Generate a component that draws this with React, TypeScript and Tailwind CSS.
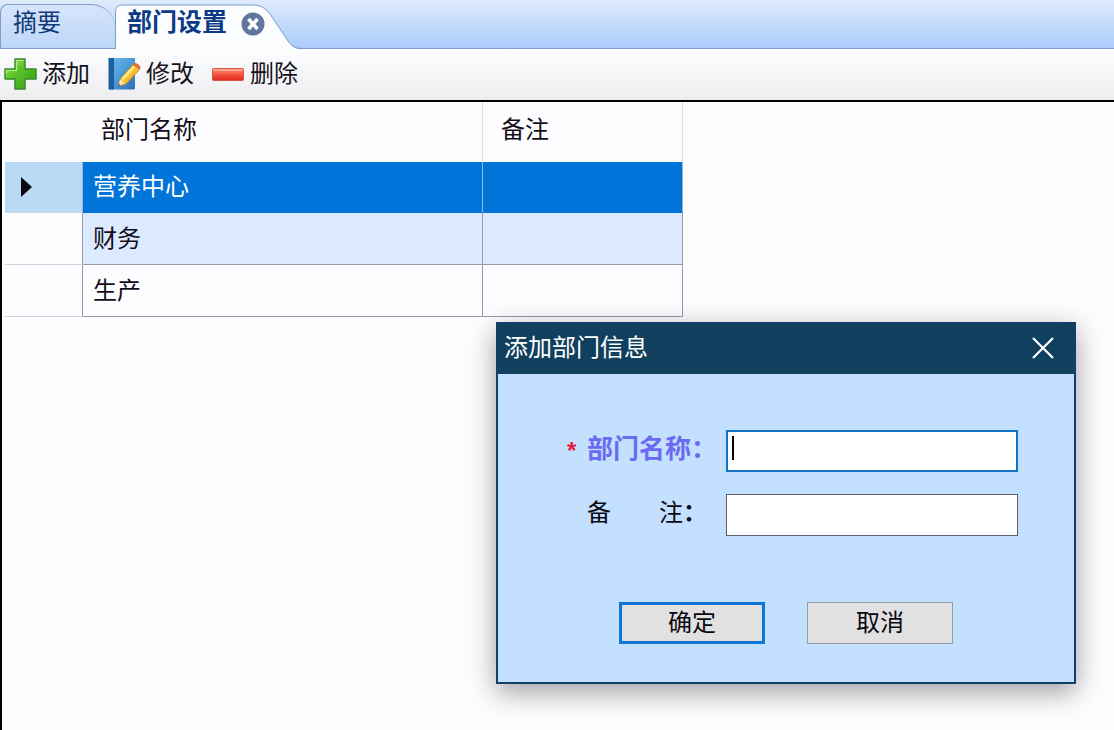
import { useState } from "react"

const departments = [
  { name: "营养中心", remark: "" },
  { name: "财务", remark: "" },
  { name: "生产", remark: "" },
]

const AddIcon = () => (
  <svg width="34" height="34" viewBox="0 0 34 34" aria-hidden="true">
    <defs>
      <linearGradient id="plus" x1="0" y1="0" x2="1" y2="1">
        <stop offset="0" stopColor="#a5e86a" />
        <stop offset="0.4" stopColor="#5cc52c" />
        <stop offset="1" stopColor="#2f9a12" />
      </linearGradient>
    </defs>
    <path d="M11 2h10v10h11v10H21v10H11V22H1V12h10z" fill="url(#plus)" stroke="#3a8a2a" strokeWidth="1.5" strokeLinejoin="round" />
    <path d="M19.500 3.500h-7V13.500H2.500v3" fill="none" stroke="#b9ee8c" strokeWidth="1.200" />
  </svg>
)

const EditIcon = () => (
  <svg width="34" height="34" viewBox="0 0 34 34" aria-hidden="true">
    <defs>
      <linearGradient id="book" x1="0" y1="0" x2="1" y2="1">
        <stop offset="0" stopColor="#6db9ea" />
        <stop offset="0.5" stopColor="#4c9bd8" />
        <stop offset="1" stopColor="#2a6fb4" />
      </linearGradient>
    </defs>
    <path d="M1 1h26v30a1.500 1.500 0 0 1-1.500 1.500H1z" fill="url(#book)" />
    <path d="M.5 1H6v31.500H.5z" fill="#1d5f9f" />
    <path d="M10.500 29 12 22 25 7.500l6.500 5L18 27z" fill="#f5bd2f" stroke="#b87918" strokeWidth="0.800" />
    <path d="M13 21.500 25 8.500l2.500 2L15 24z" fill="#ffe57d" />
    <path d="M25 7.500l1-1q1.500-1 3.500.5l2 1.500q1.500 1.500.8 3l-.8 1z" fill="#e6683c" />
    <path d="M12 22.500 10.500 29l6.500-2.500z" fill="#fbe6c0" />
    <path d="M11 27 10.500 29l2-.7z" fill="#333" />
  </svg>
)

const DeleteIcon = () => (
  <svg width="34" height="34" viewBox="0 0 34 34" aria-hidden="true">
    <defs>
      <linearGradient id="minus" x1="0" y1="0" x2="0" y2="1">
        <stop offset="0" stopColor="#ff9a80" />
        <stop offset="0.5" stopColor="#f2503a" />
        <stop offset="1" stopColor="#dd2a1b" />
      </linearGradient>
    </defs>
    <rect x="0.500" y="11.500" width="31" height="12" rx="1" fill="url(#minus)" stroke="#d9523f" />
    <path d="M2 13h28" stroke="#ffc1ae" />
  </svg>
)

const Tabs = () => (
  <nav className="flex h-[49px] items-end bg-linear-to-b from-[#dfeafb] to-[#a9cbfb] shadow-[inset_0_-1px_0_#7f9dcb]">
    <button
      type="button"
      className="flex h-[45px] w-[115px] items-start rounded-tl-lg rounded-tr-3xl border border-r-0 border-[#7f9dcb] bg-linear-to-b from-[#d6e5fb] to-[#bdd6f8] pt-1 pl-3 text-2xl leading-7 text-[#123a78]"
    >
      摘要
    </button>
    <div className="relative flex h-[45px] w-[185px] items-start gap-[14px] pt-1 pl-3">
      <svg className="absolute inset-0" width="185" height="45" viewBox="0 0 185 45" aria-hidden="true">
        <path d="M0 45V8Q0 1 7 1H138Q149 1 155 10L173 37Q178 44.500 185 45z" fill="#fcfdff" />
        <path d="M.5 45V8Q.5 1 7 1H138Q149 1 155 10L173 37Q178 44.500 185 44.500" fill="none" stroke="#7f9dcb" />
      </svg>
      <button type="button" className="relative text-[25px] leading-7 font-bold text-[#0c3a86]">
        部门设置
      </button>
      <button type="button" aria-label="关闭标签" className="relative pt-1">
        <svg width="24" height="24" viewBox="0 0 24 24" aria-hidden="true">
          <circle cx="12" cy="12" r="11.500" fill="#61769f" />
          <path d="M7.500 7l9 10M16.500 7l-9 10" stroke="#fff" strokeWidth="3.600" />
        </svg>
      </button>
    </div>
  </nav>
)

const Toolbar = () => (
  <div className="flex h-[51px] items-center gap-[18px] bg-linear-to-b from-[#fcfdff] to-[#ededf0] pb-[2px] pl-1 text-2xl leading-8 text-[#15101c]">
    <button type="button" className="flex items-center gap-1">
      <AddIcon />
      添加
    </button>
    <button type="button" className="flex items-center gap-1">
      <EditIcon />
      修改
    </button>
    <button type="button" className="flex items-center gap-1">
      <DeleteIcon />
      删除
    </button>
  </div>
)

const DepartmentTable = ({ selected, onSelect }: { selected: number; onSelect: (index: number) => void }) => (
  <table className="w-[678px] table-fixed border-separate border-spacing-0 text-2xl leading-8 text-[#120c18]">
    <colgroup>
      <col className="w-[78px]" />
      <col className="w-[400px]" />
      <col className="w-[200px]" />
    </colgroup>
    <thead>
      <tr className="h-[60px] text-left">
        <th className="font-normal" aria-label="当前行"></th>
        <th className="border-r border-[#dcdce6] pb-1 pl-[18px] font-normal">部门名称</th>
        <th className="border-r border-[#dcdce6] pb-1 pl-[18px] font-normal">备注</th>
      </tr>
    </thead>
    <tbody>
      {departments.map((department, index) => {
        const active = index === selected
        const cell = active
          ? "bg-[#0074d9] text-white border-b-[#0074d9] border-r-[#9cb6d6]"
          : index % 2 === 1
            ? "bg-[#dbeaff] border-b-[#9a97a8] border-r-[#9a97a8]"
            : "border-b-[#9a97a8] border-r-[#9a97a8]"
        return (
          <tr key={department.name} className={active ? "h-[51px]" : "h-[52px]"} onClick={() => onSelect(index)}>
            <td
              className={
                active
                  ? "border-r border-b border-r-[#9cb6d6] border-b-[#d5d9e4] bg-[#b9daf5] pl-[15px]"
                  : "border-r border-b border-r-[#9a97a8] border-b-[#d5d5de]"
              }
            >
              {active && (
                <svg width="12" height="20" viewBox="0 0 12 20" aria-hidden="true">
                  <path d="M1 0v20L12 10z" fill="#0b0710" />
                </svg>
              )}
            </td>
            <td className={`border-r border-b pl-[10px] ${cell}`}>{department.name}</td>
            <td className={`border-r border-b pl-[10px] ${cell}`}>{department.remark}</td>
          </tr>
        )
      })}
    </tbody>
  </table>
)

const AddDialog = ({ onClose }: { onClose: () => void }) => {
  const [name, setName] = useState("")
  const [remark, setRemark] = useState("")

  return (
    <div
      role="dialog"
      aria-labelledby="dialog-title"
      className="absolute top-[322px] left-[496px] w-[580px] border-2 border-[#123f68] bg-[#c3e0ff] text-2xl leading-8 text-[#0b0710] shadow-[0_8px_26px_rgba(0,0,0,0.38)]"
    >
      <div className="flex h-[50px] items-center justify-between bg-[#11405f] pr-5 pb-[2px] pl-[6px] text-white">
        <h2 id="dialog-title">添加部门信息</h2>
        <button type="button" aria-label="关闭" onClick={onClose}>
          <svg width="22" height="22" viewBox="0 0 22 22" aria-hidden="true">
            <path d="M1 1l20 20M21 1L1 21" stroke="#fff" strokeWidth="2.200" />
          </svg>
        </button>
      </div>
      <form className="pt-8 pr-6 pb-[38px] pl-9" onSubmit={(e) => e.preventDefault()}>
        <div className="flex flex-col gap-[22px] border border-[#c6ddf9] pt-[23px] pr-[31px] pb-[25px] pl-8">
          <div className="flex items-center">
            <label htmlFor="name" className="flex w-[159px] shrink-0 text-[26px] font-bold text-[#6b6bf2]">
              <span className="w-5 text-2xl leading-9 text-[#e0203a]">*</span>
              部门名称：
            </label>
            <div className="relative grow">
              <input
                id="name"
                value={name}
                onChange={(e) => setName(e.target.value)}
                className="block h-[42px] w-full border-2 border-[#1473c4] bg-white px-1 caret-transparent outline-none"
              />
              {name === "" && <span className="pointer-events-none absolute top-[6px] left-[6px] h-6 w-[2px] bg-black" />}
            </div>
          </div>
          <div className="flex items-center">
            <label htmlFor="remark" className="w-[159px] shrink-0 pb-1 pl-5 whitespace-pre">
              备　　注<b>：</b>
            </label>
            <input
              id="remark"
              value={remark}
              onChange={(e) => setRemark(e.target.value)}
              className="h-[42px] w-0 grow border border-[#5f6076] bg-white px-1 outline-none"
            />
          </div>
        </div>
        <div className="mt-[40px] flex justify-center gap-[42px] pr-3">
          <button type="submit" className="h-[42px] w-[146px] border-3 border-[#0a76d8] bg-[#e1e1e1] leading-8">
            确定
          </button>
          <button type="button" onClick={onClose} className="h-[42px] w-[146px] border border-[#9a9da6] bg-[#e1e1e1] leading-8">
            取消
          </button>
        </div>
      </form>
    </div>
  )
}

const App = () => {
  const [selected, setSelected] = useState(0)
  const [open, setOpen] = useState(true)

  return (
    <div className="relative flex min-h-screen flex-col overflow-hidden bg-[#fdfdff] font-['Liberation_Sans','Noto_Sans_CJK_SC',sans-serif]">
      <Tabs />
      <Toolbar />
      <main className="grow border-t-2 border-l-2 border-black pl-[3px]">
        <DepartmentTable selected={selected} onSelect={setSelected} />
      </main>
      {open && <AddDialog onClose={() => setOpen(false)} />}
    </div>
  )
}

export default App
